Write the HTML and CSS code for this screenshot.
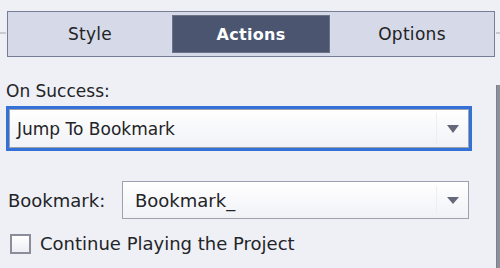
FILE: index.html
```
<!DOCTYPE html>
<html lang="en">
<head>
    <meta charset="UTF-8">
    <title>Actions</title>
    <link rel="stylesheet" href="styles.css">
</head>
<body>
    <div class="panel">
        <div class="tabrow">
            <span class="rule"></span>
            <div class="tabs">
                <div class="tab">Style</div>
                <div class="tab current">Actions</div>
                <div class="tab">Options</div>
            </div>
            <span class="rule"></span>
        </div>
        <div class="main">
            <div class="form">
                <div class="label">On Success:</div>
                <div class="select focus">
                    <span class="value">Jump To Bookmark</span>
                    <span class="sep"></span>
                    <span class="arrow"></span>
                </div>
                <div class="field">
                    <span class="field-label">Bookmark:</span>
                    <div class="select small">
                        <span class="value">Bookmark_</span>
                        <span class="sep"></span>
                        <span class="arrow"></span>
                    </div>
                </div>
                <label class="check">
                    <span class="box"></span>
                    <span>Continue Playing the Project</span>
                </label>
            </div>
            <div class="edge"></div>
        </div>
    </div>
</body>
</html>
```
FILE: styles.css
```
*{
    padding: 0;
    margin: 0;
    box-sizing: border-box;
}
body{
    width: 500px;
    height: 268px;
    overflow: hidden;
    background: #eef0f5;
    font-family: "DejaVu Sans", "Liberation Sans", sans-serif;
    color: #232428;
}
.tabrow{
    display: flex;
    align-items: center;
    padding-top: 11px;
    height: 57px;
}
.rule{
    height: 2px;
    background: #c9cbd2;
    width: 6px;
    margin-bottom: 2px;
}
.rule:last-child{
    width: 4px;
    margin-left: 1px;
}
.tabs{
    display: grid;
    grid-template-columns: 1fr 1fr 1fr;
    gap: 3px;
    width: 489px;
    margin-left: 1px;
    height: 46px;
    padding: 3px;
    border: 1px solid #777d94;
    background: #d5d9e8;
}
.tab{
    display: flex;
    align-items: center;
    justify-content: center;
    font-size: 17px;
    letter-spacing: 0.3px;
    color: #222;
}
.tab.current{
    background: #4b5570;
    border: 1px solid #6c7388;
    color: #fff;
    font-weight: bold;
    font-size: 16px;
}
.main{
    display: flex;
}
.form{
    width: 496px;
    padding: 24px 0 0 6px;
}
.edge{
    width: 4px;
    height: 183px;
    margin-top: 28px;
    background: #8d909b;
    border-left: 1px solid #7d808b;
}
.label{
    font-size: 17px;
    line-height: 20px;
    margin-bottom: 5px;
}
.select{
    display: flex;
    align-items: center;
    width: 466px;
    height: 45px;
    background: linear-gradient(#ffffff, #f1f2f6);
    border: 1px solid #9da1ae;
}
.select.focus{
    border: 3px solid #3371d6;
    box-shadow: inset 0 0 0 1px #9da1ae;
}
.value{
    flex: 1;
    font-size: 17px;
    padding-left: 8px;
}
.sep{
    width: 1px;
    align-self: stretch;
    margin: 4px 0;
    background: #eceef2;
}
.arrow{
    width: 0;
    height: 0;
    margin: 0 10px 0 10px;
    border-left: 6px solid transparent;
    border-right: 6px solid transparent;
    border-top: 8px solid #646879;
}
.field{
    display: flex;
    align-items: center;
    margin-top: 30px;
}
.field-label{
    width: 116px;
    padding-left: 2px;
    font-size: 18px;
}
.select.small{
    width: 347px;
    height: 38px;
}
.select.small .value{
    font-size: 18px;
    padding-left: 12px;
}
.select.small .arrow{
    border-left-width: 6px;
    border-right-width: 6px;
    border-top-width: 7px;
    margin-right: 9px;
}
.check{
    display: flex;
    align-items: center;
    gap: 9px;
    margin-top: 14px;
    padding-left: 4px;
    font-size: 18px;
}
.box{
    width: 21px;
    height: 20px;
    border: 2px solid #8b8e99;
    background: linear-gradient(#ffffff, #eceef3);
}
```
